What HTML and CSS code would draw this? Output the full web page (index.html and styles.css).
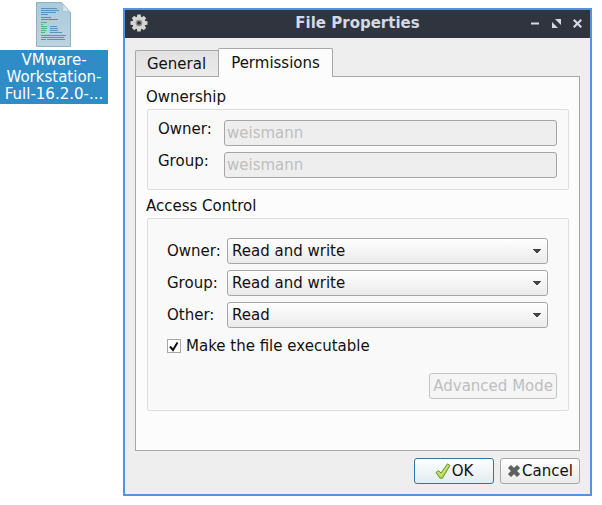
FILE: index.html
```html
<!DOCTYPE html>
<html lang="en">
<head>
<meta charset="utf-8">
<title>File Properties</title>
<link rel="stylesheet" href="styles.css">
</head>
<body>
<main class="desktop">
  <figure class="file">
    <svg class="file-icon" width="38" height="48" viewBox="0 0 38 48" aria-hidden="true">
      <defs>
        <linearGradient id="paper" x1="0" y1="0" x2="0" y2="1"><stop offset="0" stop-color="#a9cbdc"/><stop offset="1" stop-color="#bcd3e0"/></linearGradient>
      </defs>
      <path d="M1.500 2.500h25l9 10v34h-34z" fill="url(#paper)" stroke="#8fb2c3"/>
      <path d="M26.500 2.500q2.500 4 1 9q5-1 8 1z" fill="#dbe7ec" stroke="#9dbbc9" stroke-width=".7"/>
      <g fill="none" stroke-width="1" opacity=".85">
        <path stroke="#4f86b4" d="M6 8.500h16M6 10.500h18M6 12.500h15M6 14.500h7M15 26.500h7M15 28.500h8M15 30.500h8M15 32.500h12M12 39.500h18"/>
        <path stroke="#b04fb8" d="M6 17.500h10M6 19.500h17M6 35.500h25M8 37.500h21M6 39.500h5"/>
        <path stroke="#3fae7e" d="M6 22.500h6M6 24.500h2M6 26.500h6M6 28.500h6M6 30.500h5M6 32.500h4M6 37.500h2"/>
      </g>
    </svg>
    <figcaption class="file-name">VMware-<br>Workstation-<br>Full-16.2.0-...</figcaption>
  </figure>

  <section class="window" aria-labelledby="title">
    <header class="titlebar">
      <svg width="18" height="18" viewBox="0 0 18 18" aria-hidden="true">
        <g fill="#d5d5d2">
          <circle cx="9" cy="9" r="6.500"/>
          <path id="tooth" d="M7.300 .5h3.400l.6 4H6.700zM7.300 17.500h3.400l.6-4H6.700z"/>
          <use href="#tooth" transform="rotate(45 9 9)"/>
          <use href="#tooth" transform="rotate(90 9 9)"/>
          <use href="#tooth" transform="rotate(135 9 9)"/>
        </g>
        <circle cx="9" cy="9" r="3.300" fill="#8f8f8d"/>
        <circle cx="9" cy="9" r="1.800" fill="#2c303b"/>
      </svg>
      <h1 class="title" id="title">File Properties</h1>
      <div class="controls">
        <button class="control" type="button" aria-label="Minimize"><svg width="9" height="9" viewBox="0 0 9 9"><path d="M0 3.500h8v2H0z"/></svg></button>
        <button class="control" type="button" aria-label="Maximize"><svg width="9" height="9" viewBox="0 0 9 9"><path d="M3 0h6v6zM0 3v6h6z"/></svg></button>
        <button class="control" type="button" aria-label="Close"><svg width="9" height="9" viewBox="0 0 9 9"><path d="M1.500 0 4.500 3 7.500 0 9 1.500 6 4.500 9 7.500 7.500 9 4.500 6 1.500 9 0 7.500 3 4.500 0 1.500z"/></svg></button>
      </div>
    </header>

    <form class="body">
      <div class="tabs" role="tablist">
        <button class="tab" type="button" role="tab" aria-selected="false">General</button>
        <button class="tab tab-active" type="button" role="tab" aria-selected="true">Permissions</button>
      </div>
      <div class="panel" role="tabpanel">
        <h2 class="group-title">Ownership</h2>
        <div class="group fields">
          <label for="owner">Owner:</label>
          <input class="text" id="owner" type="text" value="weismann" disabled>
          <label for="group">Group:</label>
          <input class="text" id="group" type="text" value="weismann" disabled>
        </div>
        <h2 class="group-title">Access Control</h2>
        <div class="group">
          <div class="access">
            <label for="owner-access">Owner:</label>
            <select class="select" id="owner-access"><option>Read and write</option></select>
            <label for="group-access">Group:</label>
            <select class="select" id="group-access"><option>Read and write</option></select>
            <label for="other-access">Other:</label>
            <select class="select" id="other-access"><option>Read</option></select>
            <div class="executable">
              <span class="check">
                <input class="box" id="exec" type="checkbox" checked>
                <svg class="tick" width="14" height="14" viewBox="0 0 14 14" aria-hidden="true"><path d="M3 7.500 6 11 10.500 3.500" fill="none" stroke="#111" stroke-width="2"/></svg>
              </span>
              <label for="exec">Make the file executable</label>
            </div>
          </div>
          <div class="advanced"><button class="button" type="button" disabled>Advanced Mode</button></div>
        </div>
      </div>
      <footer class="actions">
        <button class="button action button-default" type="submit">
          <svg width="16" height="16" viewBox="0 0 16 16" aria-hidden="true"><path d="M1 9.500 3.500 7.500 6 10 12.500 .8 15 2.500 7.500 15.200H5z" fill="#b5d655" stroke="#6f9433" stroke-linejoin="round"/><path d="M3 9.300 6 12.500 13 2.500" fill="none" stroke="#d3e88c"/></svg>OK
        </button>
        <button class="button action" type="button">
          <svg width="14" height="14" viewBox="0 0 14 14" aria-hidden="true"><path d="M4 1.500 7 4.500 10 1.500 12.500 4 9.500 7 12.500 10 10 12.500 7 9.500 4 12.500 1.500 10 4.500 7 1.500 4z" fill="#5f6061" stroke="#505152" stroke-linejoin="round"/></svg>Cancel
        </button>
      </footer>
    </form>
  </section>
</main>
</body>
</html>
```
FILE: styles.css
```css
* {
  box-sizing: border-box;
}

body {
  margin: 0;
  background: #fff;
  color: #111;
  font: 15px/18px "DejaVu Sans", sans-serif;
}

button,
input,
select {
  margin: 0;
  font: inherit;
  color: inherit;
}

.desktop {
  display: flex;
  align-items: flex-start;
  gap: 15px;
  padding-right: 10px;
}

.file {
  flex: none;
  width: 108px;
  margin: 0;
}

.file-icon {
  display: block;
  margin: 0 auto 2px;
}

.file-name {
  padding: 2px 0 1px;
  background: #308cc6;
  color: #fff;
  line-height: 17px;
  text-align: center;
  white-space: nowrap;
}

.window {
  flex: 1;
  min-width: 0;
  margin-top: 8px;
  border: 2px solid #5294e2;
  background: #eee;
}

.titlebar {
  display: flex;
  align-items: center;
  height: 28px;
  padding: 0 8px 2px 5px;
  background: #2f343f;
}

.title {
  flex: 1;
  margin: 0;
  padding-left: 36px;
  color: #d3dae3;
  font-size: 15px;
  font-weight: bold;
  text-align: center;
}

.controls {
  display: flex;
  gap: 12px;
}

.control {
  padding: 0;
  border: 0;
  background: none;
}

.control svg {
  display: block;
  fill: #d3dae3;
}

.body {
  padding: 10px;
}

.tabs {
  display: flex;
  align-items: flex-end;
  margin-bottom: -1px;
}

.tab {
  height: 27px;
  padding: 0 12px 0 11px;
  border: 1px solid #a7a7a7;
  border-right: 0;
  border-radius: 2px 0 0 0;
  background: linear-gradient(#e2e2e2, #ebebeb);
}

.tab-active {
  position: relative;
  height: 29px;
  padding: 0 12px 1px;
  border-right: 1px solid #a7a7a7;
  border-bottom: 0;
  border-radius: 2px 2px 0 0;
  background: #fcfcfc;
}

.panel {
  padding: 11px 10px 39px;
  border: 1px solid #a7a7a7;
  background: #fcfcfc;
}

.group-title {
  margin: 0 0 3px;
  font-size: 15px;
  font-weight: normal;
}

.group {
  margin: 0 0 7px 1px;
  padding: 10px 11px 11px;
  border: 1px solid #dedede;
  border-radius: 2px;
  background: #f9f9f9;
}

.group:last-child {
  margin-bottom: 0;
}

.fields {
  display: grid;
  grid-template-columns: 56px 1fr;
  gap: 6px 10px;
  padding-left: 10px;
}

.text {
  width: 100%;
  min-width: 0;
  height: 26px;
  padding: 0 2px;
  border: 1px solid #a5a5a5;
  border-radius: 3px;
  background: #eee;
  color: #bebebe;
}

.access {
  display: grid;
  grid-template-columns: 56px 1fr;
  align-items: center;
  gap: 6px 4px;
  padding: 9px 9px 0 8px;
}

.select {
  width: 100%;
  height: 26px;
  padding: 0 24px 0 4px;
  border: 1px solid #a7a7a7;
  border-radius: 3px;
  appearance: none;
  background:
    linear-gradient(to bottom left, #444 55%, transparent 55%) right 10px center / 4px 4px no-repeat,
    linear-gradient(to bottom right, #444 55%, transparent 55%) right 6px center / 4px 4px no-repeat,
    linear-gradient(#fefefe, #ebebeb);
}

.executable {
  grid-column: 1 / -1;
  display: flex;
  align-items: center;
  gap: 5px;
  height: 24px;
}

.check {
  position: relative;
  width: 14px;
  height: 14px;
}

.box {
  display: block;
  width: 14px;
  height: 14px;
  border: 1px solid #a7a7a7;
  appearance: none;
  background: #fff;
}

.tick {
  position: absolute;
  inset: 0;
  visibility: hidden;
  pointer-events: none;
}

.box:checked + .tick {
  visibility: visible;
}

.advanced {
  display: flex;
  justify-content: flex-end;
  margin-top: 15px;
}

.button {
  display: flex;
  align-items: center;
  justify-content: center;
  height: 26px;
  padding: 0 3px;
  border: 1px solid #a7a7a7;
  border-radius: 3px;
  background: linear-gradient(#fefefe, #ebebeb);
  white-space: nowrap;
}

.button:disabled {
  border-color: #c4c4c4;
  background: #f5f5f5;
  color: #bebebe;
}

.actions {
  display: flex;
  justify-content: flex-end;
  gap: 6px;
  margin-top: 7px;
}

.action {
  gap: 1px;
  width: 80px;
}

.button-default {
  border-color: #3576a0;
  background: linear-gradient(#fdfeff, #e3ecf1);
}
```
